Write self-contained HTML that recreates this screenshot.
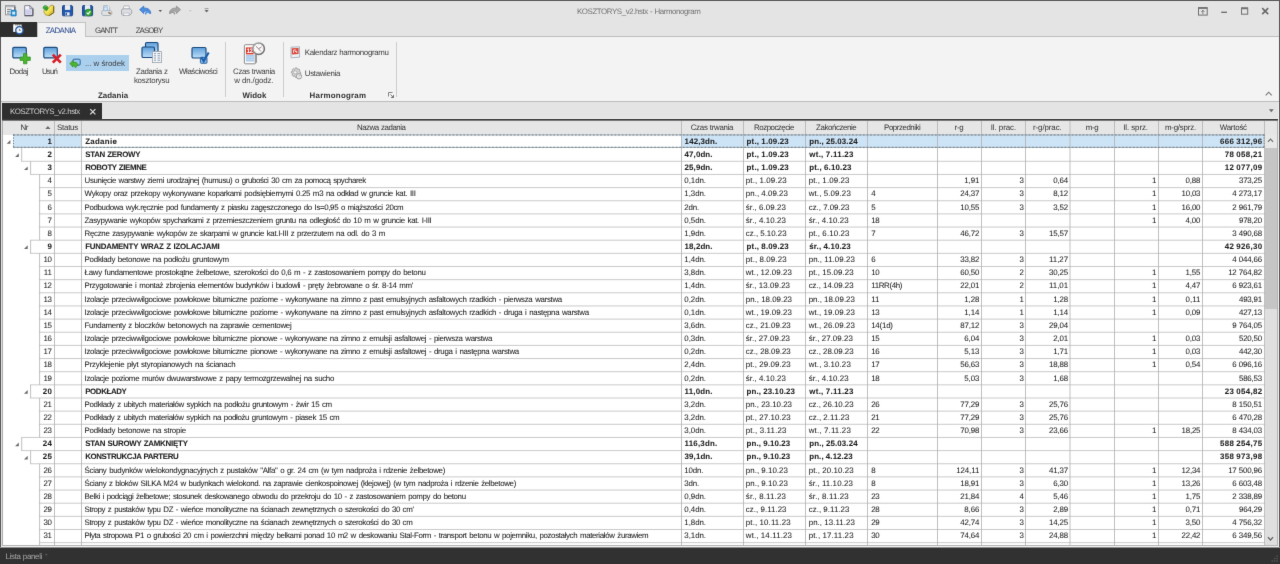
<!DOCTYPE html>
<html lang="pl">
<head>
<meta charset="utf-8">
<title>KOSZTORYS_v2.hstx - Harmonogram</title>
<style>
*{box-sizing:border-box;margin:0;padding:0}
html,body{width:1280px;height:564px;overflow:hidden;background:#e4e4e4}
body{position:relative;text-rendering:geometricPrecision;font-family:"Liberation Sans",sans-serif;font-size:7.9px;color:#444}
div,span,svg{position:absolute;white-space:pre}
span{height:12px;line-height:12px}
#win{left:0;top:0;width:1280px;height:564px;background:#e4e4e4;filter:url(#soft)}
#titlebar{left:0;top:0;width:1280px;height:37px;background:#e4e4e4}
#bt{left:0;top:0;width:1280px;height:1px;background:#585858}
#bl{left:0;top:0;width:1px;height:547px;background:#585858}
#br{left:1279px;top:0;width:1px;height:547px;background:#585858}
.ttl{color:#727272}
#appbtn{left:0;top:22px;width:37px;height:15px;background:#2e2e2e}
#tabline{left:86px;top:36px;width:1193px;height:1px;background:#c0c0c0}
#tab1{left:37px;top:22px;width:49px;height:15px;background:#f3f3f3;border:1px solid #c2c2c2;border-bottom:none}
.tb{color:#444}
.tba{color:#2c4a8e}
#ribbon{left:1px;top:37px;width:1278px;height:64px;background:#f3f3f3}
#ribline{left:1px;top:101px;width:1278px;height:1px;background:#bdbdbd}
.rt{color:#3c3c3c}
.rg{font-weight:bold;color:#303030}
.rsep{top:42px;width:1px;height:55px;background:#cdcdcd}
#hl1{left:66px;top:55px;width:63px;height:16px;background:#abd0ee}
#docbar{left:1px;top:102px;width:1278px;height:17px;background:#e4e4e4}
#doctab{left:2px;top:103px;width:100px;height:17px;background:#2e2e2e}
.dt{color:#cdcdcd}
#darkline{left:2px;top:119px;width:1276px;height:1px;background:#383838}
#preline{left:102px;top:118px;width:1176px;height:1px;background:#f0f0f0}
#darkline2{left:2px;top:120px;width:1276px;height:1px;background:#7a7a7a}
#gridbg{left:2px;top:121px;width:1276px;height:425px;background:#fff;border-left:1px solid #ababab}
#ghead{left:3px;top:121px;width:1275px;height:14px;background:#e6e6e6}
.h{color:#333}
#gbot{left:2px;top:545px;width:1276px;height:1px;background:#b4b4b4}
#gbot2{left:1px;top:546px;width:1278px;height:1px;background:#f0f0f0}
#status{left:0;top:547px;width:1280px;height:17px;background:#313131;border-top:1px solid #8e8e8e}
.sbt{color:#a6a6a6}
.c{color:#222;-webkit-text-stroke:0.05px #222}
.b{font-weight:bold;color:#202020}
#sb{left:1265px;top:135px;width:12px;height:410px;background:#dfdfdf}
#rfr{left:1277px;top:121px;width:1px;height:425px;background:#b2b2b2}
#rfr2{left:1278px;top:102px;width:1px;height:445px;background:#f2f2f2}
#sbth{left:1265px;top:148px;width:12px;height:161px;background:#c5c5c5}
#sbup{left:1265px;top:135px;width:12px;height:13px;background:#e8e8e8}
#hcorner{left:1265px;top:121px;width:12px;height:14px;background:#e6e6e6}
</style>
</head>
<body>
<svg width="0" height="0" style="left:0;top:0"><defs><filter id="soft" x="0" y="0" width="100%" height="100%" color-interpolation-filters="sRGB"><feConvolveMatrix order="3" kernelMatrix="0 1 0 1 10 1 0 1 0" divisor="14" edgeMode="duplicate" preserveAlpha="true"/></filter></defs></svg>
<div id="win">
<div id="titlebar"></div>
<div id="tabline"></div>
<div id="tab1"></div>
<div id="ribbon"></div>
<div id="ribline"></div>
<div id="hl1"></div>
<svg style="left:12px;top:46px" width="20" height="19" viewBox="0 0 20 19"><defs><linearGradient id="mg" x1="0" y1="0" x2="0" y2="1"><stop offset="0" stop-color="#5e9edb"/><stop offset="1" stop-color="#bfe0f8"/></linearGradient></defs><rect x="0.8" y="1.4" width="13.5" height="10.5" rx="1.3" fill="url(#mg)" stroke="#19497d" stroke-width="1.15"/><path d="M11.500 7.600h3.400v3.400h3.400v3.400h-3.400v3.400h-3.400v-3.400h-3.400v-3.400h3.400z" fill="#4bb52f" stroke="#2b8a1d" stroke-width="0.700"/></svg><svg style="left:43px;top:46px" width="20" height="19" viewBox="0 0 20 19"><rect x="0.8" y="1.4" width="13.5" height="10.5" rx="1.3" fill="url(#mg)" stroke="#19497d" stroke-width="1.15"/><path d="M9.800 8.600l8 8M17.800 8.600l-8 8" stroke="#d3202a" stroke-width="2.700"/></svg><svg style="left:69px;top:58px" width="12" height="11" viewBox="0 0 12 11"><rect x="4" y="1.200" width="7.200" height="6" rx="1" fill="#9cc8ee" stroke="#1f5b95" stroke-width="0.900"/><path d="M0.800 5.500l3.200-3v1.800h3.200l1.800 2.200-2.300 3.300-2-2.200h-.700v1.600z" fill="#4db330" stroke="#2b8a1d" stroke-width="0.600"/></svg><svg style="left:141px;top:41px" width="23" height="23" viewBox="0 0 23 23"><rect x="4.5" y="1.5" width="12.5" height="10" rx="1.3" fill="url(#mg)" stroke="#19497d" stroke-width="1.15"/><rect x="1.0" y="6.0" width="12.5" height="10.5" rx="1.3" fill="url(#mg)" stroke="#19497d" stroke-width="1.15"/><rect x="11.400" y="10.600" width="9" height="11" fill="#f3f5f8" stroke="#9aa0a8" stroke-width="0.800"/><path d="M13 12.600h2M16.500 12.600h2.600M13 14.800h2M16.500 14.800h2.600M13 17h2M16.500 17h2.600M13 19.200h2M16.500 19.200h2.600" stroke="#7f93ad" stroke-width="0.900"/></svg><svg style="left:191px;top:46px" width="21" height="19" viewBox="0 0 21 19"><rect x="1.0" y="1.5" width="14" height="10.5" rx="1.3" fill="url(#mg)" stroke="#19497d" stroke-width="1.15"/><rect x="9.400" y="11.300" width="6.600" height="6" rx="0.800" fill="#8db9e6" stroke="#1e5a9b" stroke-width="0.900"/><path d="M10.300 11.300l2.400 3.800 5-8.600" stroke="#1c5fae" stroke-width="2.100" fill="none"/></svg><svg style="left:243px;top:40px" width="24" height="25" viewBox="0 0 24 25"><defs><linearGradient id="cg" x1="0" y1="0" x2="1" y2="1"><stop offset="0" stop-color="#a9a9a9"/><stop offset="1" stop-color="#5f5f5f"/></linearGradient></defs><path d="M1.400 5.600q0-.9.900-.9h10.200q.9 0 .9.900v16.900l-1.700 1.300h-9.400q-.9 0-.9-.9z" fill="#fdfdfd" stroke="#808080" stroke-width="0.900"/><path d="M13.400 8v14.500l-1.700 1.300v-14z" fill="#9c9c9c"/><rect x="2.900" y="7.400" width="7.700" height="7" fill="#d9392e"/><rect x="2.900" y="14.900" width="8.300" height="6.600" fill="#a9c9ea"/><path d="M2.900 17.100h8.300M2.900 19.300h8.300" stroke="#dbe9f7" stroke-width="0.600"/><text x="3.400" y="13.300" font-family="Liberation Sans,sans-serif" font-size="6.400" font-weight="bold" fill="#fff" letter-spacing="-0.400">12</text><circle cx="15.600" cy="8.700" r="5.800" fill="#fbfbfb" stroke="url(#cg)" stroke-width="1.500"/><path d="M15.600 4.100v1M15.600 12.300v1M11 8.700h1M19.200 8.700h1M12.400 5.500l.7.700M18.100 11.200l.7.700M18.800 5.500l-.7.700M13.100 11.200l-.7.700" stroke="#bcbcbc" stroke-width="0.600"/><path d="M15.600 8.700l-2.600-2.300M15.600 8.700l2.900-1.700M15.600 8.700l2.100 2.600" stroke="#7c4a63" stroke-width="0.700"/></svg><svg style="left:290px;top:46px" width="11" height="13" viewBox="0 0 11 13"><path d="M1 1.200l8.500-.400v10.400l-8.500.600z" fill="#eef1f6" stroke="#9aa4b4" stroke-width="0.800"/><path d="M1.800 2.200l6.800-.300v6.200l-6.800.400z" fill="#d9483c"/><path d="M3.600 4h2.600M3.600 4v3M5 5.500h1.800v1.600" stroke="#fff" stroke-width="0.800" fill="none"/></svg><svg style="left:290px;top:67px" width="13" height="13" viewBox="0 0 13 13"><path d="M5.500 0.800l1.500.200.500 1.500 1.500-.600 1 1.100-.800 1.400 1.400.700v1.500l-1.500.500.600 1.500-1.100 1-1.400-.800-.700 1.400h-1.500l-.500-1.500-1.500.600-1-1.100.800-1.400-1.400-.700v-1.500l1.500-.500-.600-1.500 1.100-1 1.400.800z" fill="#d6d6d6" stroke="#8f8f8f" stroke-width="0.700"/><circle cx="5.300" cy="5.400" r="1.700" fill="#f3f3f3" stroke="#8f8f8f" stroke-width="0.600"/><circle cx="9" cy="9.300" r="2.700" fill="#e9e9e9" stroke="#8a8a8a" stroke-width="0.800"/><path d="M9 9.300l1.200-1.200" stroke="#777" stroke-width="0.600"/></svg><svg style="left:388px;top:92px" width="6" height="6" viewBox="0 0 6 6"><path d="M0.500 4.500V0.500h4" stroke="#777" stroke-width="0.900" fill="none"/><path d="M2.500 2.500l3 3M5.500 3v2.500h-2.500" stroke="#666" stroke-width="0.900" fill="none"/></svg>
<div class="rsep" style="left:225px"></div>
<div class="rsep" style="left:283px"></div>
<div class="rsep" style="left:396px"></div>
<div id="docbar"></div>
<div id="doctab"></div>
<svg style="left:5px;top:5px" width="12" height="12" viewBox="0 0 12 12"><rect x="0.500" y="0.500" width="9.400" height="9.300" fill="#fafafa" stroke="#8e9298" stroke-width="1"/><rect x="0.500" y="0.500" width="9.400" height="1.900" fill="#b0b4ba"/><path d="M9.900 1.500v3.700" stroke="#3c3c3c" stroke-width="0.900"/><path d="M2 4.300h4.600M2 6.300h3.200M2 8.100h2.700" stroke="#5f6870" stroke-width="0.900"/><rect x="5.900" y="5.100" width="5.400" height="6" rx="0.700" fill="#2490d4" stroke="#1a6fae" stroke-width="0.500"/><rect x="7.200" y="6.700" width="2.900" height="2.800" fill="#d4ebfa"/></svg><svg style="left:24px;top:5px" width="10" height="12" viewBox="0 0 10 12"><path d="M0.700 0.700h5.200l3 3v7h-8.200z" fill="#dcdcf3" stroke="#77778a" stroke-width="0.900"/><path d="M1.300 1.300h4l0 2.600h-4z" fill="#f4f4fc"/><path d="M8.900 3.700v7h-8.200" fill="none" stroke="#4d4d59" stroke-width="1"/><path d="M5.900 0.700v3h3z" fill="#ececf8" stroke="#6c6c7c" stroke-width="0.700"/><path d="M2.200 6.200h4.800M2.200 8.200h4.800" stroke="#bdbce0" stroke-width="0.900"/></svg><svg style="left:42px;top:4px" width="13" height="13" viewBox="0 0 13 13"><defs><linearGradient id="fg" x1="0" y1="0" x2="1" y2="1"><stop offset="0" stop-color="#f6f294"/><stop offset="0.550" stop-color="#f1e052"/><stop offset="1" stop-color="#c4a21c"/></linearGradient></defs><path d="M2.400 5.500l2.600-3 1.600 1.300 2.200-2.500h2.300l0.600 0.700v6.700l-4.600 2.900-3.400-0.600-1.900-3.300z" fill="url(#fg)" stroke="#9a8420" stroke-width="0.700"/><path d="M11.700 2.200v6.500l-4.600 2.900" fill="none" stroke="#6f5e12" stroke-width="1"/><path d="M1 4.300c0-2 1.600-3.100 3.100-2.600 1.100 0.400 1.600 1.400 1.400 2.600l0.800 0.100-2 2.500-2.300-2.400z" fill="#2f9e2c" stroke="#1b7a1d" stroke-width="0.500"/><path d="M2.300 3.400c0.500-.900 1.400-1.100 2.100-.600" stroke="#8be381" stroke-width="0.800" fill="none"/></svg><svg style="left:62px;top:5px" width="12" height="12" viewBox="0 0 12 12"><path d="M0.500 1.600a1.100 1.100 0 0 1 1.100-1.100h8.100l0.900 0.900v8.300a1.100 1.100 0 0 1-1.100 1.100h-8a1.100 1.100 0 0 1-1.100-1.100z" fill="#2159ae" stroke="#123a82" stroke-width="0.900"/><rect x="2.900" y="0.100" width="5.300" height="4.800" fill="#ededee"/><rect x="3" y="7.400" width="4.600" height="3.100" fill="#e7edf7"/><rect x="3.500" y="7.900" width="1.500" height="2.200" fill="#2c4f92"/></svg><svg style="left:82px;top:5px" width="12" height="12" viewBox="0 0 12 12"><path d="M0.500 1.600a1.100 1.100 0 0 1 1.100-1.100h8.100l0.900 0.900v8.300a1.100 1.100 0 0 1-1.100 1.100h-8a1.100 1.100 0 0 1-1.100-1.100z" fill="#2159ae" stroke="#123a82" stroke-width="0.900"/><rect x="2.900" y="0.100" width="5.300" height="4.800" fill="#ededee"/><rect x="3" y="7.400" width="4.600" height="3.100" fill="#e7edf7"/><rect x="3.500" y="7.900" width="1.500" height="2.200" fill="#2c4f92"/><circle cx="6.500" cy="7.600" r="3.500" fill="#37a637" stroke="#1d7a22" stroke-width="0.6"/><path d="M4.700 7.600l1.400 1.500 2.300-3" stroke="#fff" stroke-width="1.100" fill="none"/></svg><svg style="left:101px;top:5px" width="12" height="12" viewBox="0 0 12 12"><path d="M2.600 0.600h4.400l1.700 1.700v5.400h-6.100z" fill="#f4f8fd" stroke="#a5adba" stroke-width="0.8"/><path d="M0.800 6.200l1.400-.900h7.200l1.400 1.300v2.600l-1.800 1.300h-6.800l-1.400-1.100z" fill="#dfe2e7" stroke="#9da3ac" stroke-width="0.8"/><circle cx="4.700" cy="3.800" r="2.200" fill="#cfe5f9" stroke="#93acc8" stroke-width="0.8"/><path d="M7.400 7.200l2.400 1.700" stroke="#9b7a52" stroke-width="1.700"/></svg><svg style="left:121px;top:5px" width="12" height="12" viewBox="0 0 12 12"><path d="M3 0.900h4.800l1.100 3.500h-6.900z" fill="#fdfdfd" stroke="#a3a8b0" stroke-width="0.8"/><path d="M0.600 4.900l1.800-1.100h6.800l1.500 1.500v3.100l-2.300 2.100h-6.500l-1.300-1.400z" fill="#dcdee2" stroke="#90959d" stroke-width="0.8"/><path d="M2.300 8.100h6.200l-.9 2.400h-4.500z" fill="#fafafa" stroke="#a3a8b0" stroke-width="0.6"/></svg><svg style="left:139px;top:5px" width="13" height="12" viewBox="0 0 13 12"><path d="M0.600 4.600l4.200-3.500v2.100c4.200-.5 7 1.600 6.900 5.400-1.100-1.900-3-2.700-4.900-2.500l-2 0.500v2z" fill="#4a8fe2" stroke="#2c69bd" stroke-width="0.7"/><path d="M6.600 9.600c0-1.500 0.900-2.600 2.200-2.600 1.100 0 1.900 0.700 2.100 1.800" fill="none" stroke="#4a8fe2" stroke-width="1.300"/></svg><svg style="left:158px;top:9px" width="5" height="4" viewBox="0 0 5 4"><path d="M0.500 0.900h3.600l-1.800 2.200z" fill="#5a5a5a"/></svg><svg style="left:169px;top:5px" width="13" height="12" viewBox="0 0 13 12"><path d="M11.600 4.600l-4.200-3.500v2.100c-4.200-.5-7 1.600-6.900 5.400 1.100-1.900 3-2.700 4.900-2.500l2 0.500v2z" fill="#a6a6a6" stroke="#8a8a8a" stroke-width="0.7"/><path d="M5.600 9.600c0-1.500-0.900-2.600-2.200-2.600-1.100 0-1.900 0.700-2.100 1.800" fill="none" stroke="#9a9a9a" stroke-width="1.300"/></svg><svg style="left:188px;top:9px" width="5" height="4" viewBox="0 0 5 4"><path d="M0.500 0.900h3.600l-1.800 2.200z" fill="#cdcdcd"/></svg><svg style="left:204px;top:8px" width="6" height="6" viewBox="0 0 6 6"><path d="M0.700 0.600h3.800" stroke="#7a7a7a" stroke-width="0.7"/><path d="M0.500 1.900h4.200l-2.100 2.700z" fill="#666"/></svg>
<svg style="left:1198px;top:7px" width="10" height="9" viewBox="0 0 10 9"><rect x="0.500" y="0.600" width="8.700" height="7.500" fill="none" stroke="#707070" stroke-width="1"/><path d="M0.500 1.200h8.700" stroke="#707070" stroke-width="1.400"/><path d="M4.850 7.200V3.300M3.300 4.900l1.550-1.700 1.550 1.700" stroke="#707070" stroke-width="0.9" fill="none"/></svg><svg style="left:1221px;top:11px" width="7" height="3" viewBox="0 0 7 3"><path d="M0.200 1.300h5.800" stroke="#686868" stroke-width="1.300"/></svg><svg style="left:1241px;top:7px" width="8" height="8" viewBox="0 0 8 8"><rect x="0.500" y="0.900" width="6.200" height="6.300" fill="none" stroke="#707070" stroke-width="1"/><path d="M0.500 1.400h6.200" stroke="#707070" stroke-width="1.700"/></svg><svg style="left:1261px;top:7px" width="9" height="8" viewBox="0 0 9 8"><path d="M1.200 1.100l6 6M7.200 1.100l-6 6" stroke="#666" stroke-width="1.500"/></svg><svg style="left:1265px;top:91px" width="8" height="5" viewBox="0 0 8 5"><path d="M0.700 4.300l3-3.100 3 3.100" stroke="#737373" stroke-width="1.100" fill="none"/></svg><svg style="left:1268px;top:108px" width="7" height="5" viewBox="0 0 7 5"><path d="M0.900 1.300h4.800l-2.400 3z" fill="#666"/></svg>
<svg style="left:89px;top:108px" width="8" height="8" viewBox="0 0 8 8"><path d="M1.200 1.100l5.200 5.200M6.400 1.100l-5.200 5.200" stroke="#e6e6e6" stroke-width="1.150"/></svg>
<div id="preline"></div><div id="darkline"></div><div id="darkline2"></div>
<div id="gridbg"></div>
<div id="ghead"></div>
<div id="hcorner"></div>
<svg style="left:45px;top:125px" width="6" height="5" viewBox="0 0 6 5"><path d="M0.300 4l2.600-3 2.600 3z" fill="#6c6c6c"/></svg>
<svg id="gsvg" width="1280" height="564" viewBox="0 0 1280 564" style="left:0;top:0"><rect x="13.3" y="134.7" width="1251.2" height="12.65" fill="#cde4f7"/><rect x="82" y="134.7" width="599" height="12.65" fill="#fff"/><path d="M21.2 161.3H1265M30.1 174.45H1265M39.1 187.6H1265M39.1 200.75H1265M39.1 213.9H1265M39.1 227.05H1265M30.1 240.2H1265M30.1 253.35H1265M39.1 266.5H1265M39.1 279.65H1265M39.1 292.8H1265M39.1 305.95H1265M39.1 319.1H1265M39.1 332.25H1265M39.1 345.4H1265M39.1 358.55H1265M39.1 371.7H1265M30.1 384.85H1265M30.1 398H1265M39.1 411.15H1265M39.1 424.3H1265M21.2 437.45H1265M21.2 450.6H1265M30.1 463.75H1265M39.1 476.9H1265M39.1 490.05H1265M39.1 503.2H1265M39.1 516.35H1265M39.1 529.5H1265M39.1 542.65H1265" stroke="#bcbcbc" stroke-width="0.8" fill="none"/><path d="M21.7 148.15V161.3M30.6 161.3V174.45M39.6 174.45V240.2M30.6 240.2V253.35M39.6 253.35V384.85M30.6 384.85V398M39.6 398V437.45M21.7 437.45V450.6M30.6 450.6V463.75M39.6 463.75V545.5M54.5 121V545.5M81.5 121V545.5M681.5 121V545.5M743.5 121V545.5M805.5 121V545.5M867.5 121V545.5M937.5 121V545.5M981.5 121V545.5M1025.5 121V545.5M1070 121V545.5M1114.5 121V545.5M1158.5 121V545.5M1202.5 121V545.5M1264.5 121V545.5" stroke="#b0b0b0" stroke-width="0.8" fill="none"/><path d="M13.3 134.95H1264.5" stroke="#9ea9b2" stroke-width="1" fill="none"/><path d="M13.3 134.95H1264.5" stroke="#77828b" stroke-width="1" stroke-dasharray="1.8 1.8" fill="none"/><path d="M13.3 147.35H1264.5" stroke="#9ea9b2" stroke-width="1" fill="none"/><path d="M13.3 147.35H1264.5" stroke="#77828b" stroke-width="1" stroke-dasharray="1.8 1.8" fill="none"/><path d="M13.5 134.65V147.35M1264 134.65V147.35" stroke="#68727b" stroke-width="0.9" stroke-dasharray="1.36 1.36" fill="none"/><path d="M10.4 143.8v-3.7l-3.7 3.7zM18.8 156.95v-3.7l-3.7 3.7zM27.7 170.1v-3.7l-3.7 3.7zM27.7 249v-3.7l-3.7 3.7zM27.7 393.65v-3.7l-3.7 3.7zM18.8 446.25v-3.7l-3.7 3.7zM27.7 459.4v-3.7l-3.7 3.7z" fill="#6a6a6a"/></svg>
<span class="ttl" style="left:577px;top:6px;letter-spacing:-0.41px;word-spacing:0.41px">KOSZTORYS_v2.hstx - Harmonogram</span>
<span class="tb tba" style="left:45.7px;top:25px;letter-spacing:-0.64px;word-spacing:0.64px">ZADANIA</span>
<span class="tb" style="left:94.9px;top:25px;letter-spacing:-0.9px;word-spacing:0.9px">GANTT</span>
<span class="tb" style="left:135.7px;top:25px;letter-spacing:-0.9px;word-spacing:0.9px">ZASOBY</span>
<span class="rt" style="left:9.4px;top:66px;letter-spacing:-0.41px;word-spacing:0.41px">Dodaj</span>
<span class="rt" style="left:41.9px;top:66px;letter-spacing:-0.81px;word-spacing:0.81px">Usuń</span>
<span class="rt" style="left:84.9px;top:58px;letter-spacing:-0.03px;word-spacing:0.03px">... w środek</span>
<span class="rt" style="left:136px;top:66px;letter-spacing:-0.4px;word-spacing:0.4px">Zadania z</span>
<span class="rt" style="left:133.9px;top:75px;letter-spacing:-0.22px;word-spacing:0.22px">kosztorysu</span>
<span class="rt" style="left:179px;top:66px;letter-spacing:-0.41px;word-spacing:0.41px">Właściwości</span>
<span class="rt" style="left:233.1px;top:66px;letter-spacing:-0.35px;word-spacing:0.35px">Czas trwania</span>
<span class="rt" style="left:234.3px;top:75px;letter-spacing:-0.14px;word-spacing:0.14px">w dn./godz.</span>
<span class="rt" style="left:304.8px;top:47px;letter-spacing:-0.36px;word-spacing:0.36px">Kalendarz harmonogramu</span>
<span class="rt" style="left:304.8px;top:68px;letter-spacing:-0.32px;word-spacing:0.32px">Ustawienia</span>
<span class="rg" style="left:97.9px;top:90px;letter-spacing:0.06px;word-spacing:-0.06px">Zadania</span>
<span class="rg" style="left:242.6px;top:90px;letter-spacing:0.04px;word-spacing:-0.04px">Widok</span>
<span class="rg" style="left:309.6px;top:90px;letter-spacing:0.25px;word-spacing:-0.25px">Harmonogram</span>
<span class="dt" style="left:9.9px;top:106px;letter-spacing:-0.46px;word-spacing:0.46px">KOSZTORYS_v2.hstx</span>
<span class="h" style="left:20.4px;top:122px;letter-spacing:-0.3px;word-spacing:0.3px">Nr</span>
<span class="h" style="left:57.1px;top:122px;letter-spacing:-0.26px;word-spacing:0.26px">Status</span>
<span class="h" style="left:356.9px;top:122px;letter-spacing:-0.44px;word-spacing:0.44px">Nazwa zadania</span>
<span class="h" style="left:690.7px;top:122px;letter-spacing:-0.28px;word-spacing:0.28px">Czas trwania</span>
<span class="h" style="left:754.1px;top:122px;letter-spacing:-0.5px;word-spacing:0.5px">Rozpoczęcie</span>
<span class="h" style="left:816.1px;top:122px;letter-spacing:-0.41px;word-spacing:0.41px">Zakończenie</span>
<span class="h" style="left:884.1px;top:122px;letter-spacing:-0.45px;word-spacing:0.45px">Poprzedniki</span>
<span class="h" style="left:954.5px;top:122px;letter-spacing:-0.23px;word-spacing:0.23px">r-g</span>
<span class="h" style="left:990.7px;top:122px;letter-spacing:-0.07px;word-spacing:0.07px">Il. prac.</span>
<span class="h" style="left:1033px;top:122px;letter-spacing:-0.08px;word-spacing:0.08px">r-g/prac.</span>
<span class="h" style="left:1085.7px;top:122px;letter-spacing:-0.3px;word-spacing:0.3px">m-g</span>
<span class="h" style="left:1123.2px;top:122px;letter-spacing:-0.09px;word-spacing:0.09px">Il. sprz.</span>
<span class="h" style="left:1164.9px;top:122px;letter-spacing:-0.21px;word-spacing:0.21px">m-g/sprz.</span>
<span class="h" style="left:1219.7px;top:122px;letter-spacing:-0.21px;word-spacing:0.21px">Wartość</span>
<span class="c b" style="right:1228.1px;top:136px">1</span><span class="c b" style="left:85.2px;top:136px;letter-spacing:0.3px;word-spacing:-0.3px">Zadanie</span><span class="c b" style="left:684.6px;top:136px;letter-spacing:0.15px;word-spacing:-0.15px">142,3dn.</span><span class="c b" style="left:746.6px;top:136px;letter-spacing:0.18px;word-spacing:-0.18px">pt., 1.09.23</span><span class="c b" style="left:809.3px;top:136px;letter-spacing:0.12px;word-spacing:-0.12px">pn., 25.03.24</span><span class="c b" style="right:17.57px;top:136px;letter-spacing:0.33px;word-spacing:-0.33px">666 312,96</span>
<span class="c b" style="right:1228.1px;top:149px">2</span><span class="c b" style="left:85.2px;top:149px;letter-spacing:-0.27px;word-spacing:0.27px">STAN ZEROWY</span><span class="c b" style="left:684.6px;top:149px;letter-spacing:0.11px;word-spacing:-0.11px">47,0dn.</span><span class="c b" style="left:746.6px;top:149px;letter-spacing:0.18px;word-spacing:-0.18px">pt., 1.09.23</span><span class="c b" style="left:809.3px;top:149px;letter-spacing:0.29px;word-spacing:-0.29px">wt., 7.11.23</span><span class="c b" style="right:17.58px;top:149px;letter-spacing:0.32px;word-spacing:-0.32px">78 058,21</span>
<span class="c b" style="right:1228.1px;top:162px">3</span><span class="c b" style="left:85.2px;top:162px;letter-spacing:-0.37px;word-spacing:0.37px">ROBOTY ZIEMNE</span><span class="c b" style="left:684.6px;top:162px;letter-spacing:0.11px;word-spacing:-0.11px">25,9dn.</span><span class="c b" style="left:746.6px;top:162px;letter-spacing:0.18px;word-spacing:-0.18px">pt., 1.09.23</span><span class="c b" style="left:809.3px;top:162px;letter-spacing:0.18px;word-spacing:-0.18px">pt., 6.10.23</span><span class="c b" style="right:17.58px;top:162px;letter-spacing:0.32px;word-spacing:-0.32px">12 077,09</span>
<span class="c" style="right:1228.1px;top:175px">4</span><span class="c" style="left:84.6px;top:175px;letter-spacing:-0.37px;word-spacing:0.87px">Usunięcie warstwy ziemi urodzajnej (humusu) o grubości 30 cm za pomocą spycharek</span><span class="c" style="left:684.3px;top:175px;letter-spacing:-0.04px;word-spacing:0.04px">0,1dn.</span><span class="c" style="left:745.8px;top:175px;letter-spacing:0.13px;word-spacing:-0.13px">pt., 1.09.23</span><span class="c" style="left:808.7px;top:175px;letter-spacing:0.13px;word-spacing:-0.13px">pt., 1.09.23</span><span class="c" style="right:300.84px;top:175px;letter-spacing:-0.14px;word-spacing:0.14px">1,91</span><span class="c" style="right:256.2px;top:175px">3</span><span class="c" style="right:212.04px;top:175px;letter-spacing:-0.14px;word-spacing:0.14px">0,64</span><span class="c" style="right:123.6px;top:175px">1</span><span class="c" style="right:79.64px;top:175px;letter-spacing:-0.14px;word-spacing:0.14px">0,88</span><span class="c" style="right:18.11px;top:175px;letter-spacing:-0.21px;word-spacing:0.21px">373,25</span>
<span class="c" style="right:1228.1px;top:188px">5</span><span class="c" style="left:84.6px;top:188px;letter-spacing:-0.29px;word-spacing:0.79px">Wykopy oraz przekopy wykonywane koparkami podsiębiernymi 0.25 m3 na odkład w gruncie kat. III</span><span class="c" style="left:684.3px;top:188px;letter-spacing:-0.04px;word-spacing:0.04px">1,3dn.</span><span class="c" style="left:745.8px;top:188px;letter-spacing:0.04px;word-spacing:-0.04px">pn., 4.09.23</span><span class="c" style="left:808.7px;top:188px;letter-spacing:0.13px;word-spacing:-0.13px">wt., 5.09.23</span><span class="c" style="left:871.2px;top:188px">4</span><span class="c" style="right:300.88px;top:188px;letter-spacing:-0.18px;word-spacing:0.18px">24,37</span><span class="c" style="right:256.2px;top:188px">3</span><span class="c" style="right:212.04px;top:188px;letter-spacing:-0.14px;word-spacing:0.14px">8,12</span><span class="c" style="right:123.6px;top:188px">1</span><span class="c" style="right:79.68px;top:188px;letter-spacing:-0.18px;word-spacing:0.18px">10,03</span><span class="c" style="right:18.04px;top:188px;letter-spacing:-0.14px;word-spacing:0.14px">4 273,17</span>
<span class="c" style="right:1228.1px;top:202px">6</span><span class="c" style="left:84.6px;top:202px;letter-spacing:-0.35px;word-spacing:0.85px">Podbudowa wyk.ręcznie pod fundamenty z piasku zagęszczonego do Is=0,95 o miąższości 20cm</span><span class="c" style="left:684.3px;top:202px;letter-spacing:-0.14px;word-spacing:0.14px">2dn.</span><span class="c" style="left:745.8px;top:202px;letter-spacing:0.1px;word-spacing:-0.1px">śr., 6.09.23</span><span class="c" style="left:808.7px;top:202px">cz., 7.09.23</span><span class="c" style="left:871.2px;top:202px">5</span><span class="c" style="right:300.88px;top:202px;letter-spacing:-0.18px;word-spacing:0.18px">10,55</span><span class="c" style="right:256.2px;top:202px">3</span><span class="c" style="right:212.04px;top:202px;letter-spacing:-0.14px;word-spacing:0.14px">3,52</span><span class="c" style="right:123.6px;top:202px">1</span><span class="c" style="right:79.68px;top:202px;letter-spacing:-0.18px;word-spacing:0.18px">16,00</span><span class="c" style="right:18.04px;top:202px;letter-spacing:-0.14px;word-spacing:0.14px">2 961,79</span>
<span class="c" style="right:1228.1px;top:215px">7</span><span class="c" style="left:84.6px;top:215px;letter-spacing:-0.32px;word-spacing:0.82px">Zasypywanie wykopów spycharkami z przemieszczeniem gruntu na odległość do 10 m w gruncie kat. I-III</span><span class="c" style="left:684.3px;top:215px;letter-spacing:-0.04px;word-spacing:0.04px">0,5dn.</span><span class="c" style="left:745.8px;top:215px;letter-spacing:0.1px;word-spacing:-0.1px">śr., 4.10.23</span><span class="c" style="left:808.7px;top:215px;letter-spacing:0.1px;word-spacing:-0.1px">śr., 4.10.23</span><span class="c" style="left:871.2px;top:215px;letter-spacing:-0.3px;word-spacing:0.3px">18</span><span class="c" style="right:123.6px;top:215px">1</span><span class="c" style="right:79.64px;top:215px;letter-spacing:-0.14px;word-spacing:0.14px">4,00</span><span class="c" style="right:18.11px;top:215px;letter-spacing:-0.21px;word-spacing:0.21px">978,20</span>
<span class="c" style="right:1228.1px;top:228px">8</span><span class="c" style="left:84.6px;top:228px;letter-spacing:-0.31px;word-spacing:0.81px">Ręczne zasypywanie wykopów ze skarpami w gruncie kat.I-III z przerzutem na odl. do 3 m</span><span class="c" style="left:684.3px;top:228px;letter-spacing:-0.04px;word-spacing:0.04px">1,9dn.</span><span class="c" style="left:745.8px;top:228px">cz., 5.10.23</span><span class="c" style="left:808.7px;top:228px;letter-spacing:0.13px;word-spacing:-0.13px">pt., 6.10.23</span><span class="c" style="left:871.2px;top:228px">7</span><span class="c" style="right:300.88px;top:228px;letter-spacing:-0.18px;word-spacing:0.18px">46,72</span><span class="c" style="right:256.2px;top:228px">3</span><span class="c" style="right:212.08px;top:228px;letter-spacing:-0.18px;word-spacing:0.18px">15,57</span><span class="c" style="right:18.04px;top:228px;letter-spacing:-0.14px;word-spacing:0.14px">3 490,68</span>
<span class="c b" style="right:1228.1px;top:241px">9</span><span class="c b" style="left:85.2px;top:241px;letter-spacing:-0.22px;word-spacing:0.72px">FUNDAMENTY WRAZ Z IZOLACJAMI</span><span class="c b" style="left:684.6px;top:241px;letter-spacing:0.11px;word-spacing:-0.11px">18,2dn.</span><span class="c b" style="left:746.6px;top:241px;letter-spacing:0.18px;word-spacing:-0.18px">pt., 8.09.23</span><span class="c b" style="left:809.3px;top:241px;letter-spacing:0.15px;word-spacing:-0.15px">śr., 4.10.23</span><span class="c b" style="right:17.58px;top:241px;letter-spacing:0.32px;word-spacing:-0.32px">42 926,30</span>
<span class="c" style="right:1228.4px;top:254px;letter-spacing:-0.3px;word-spacing:0.3px">10</span><span class="c" style="left:84.6px;top:254px;letter-spacing:-0.24px;word-spacing:0.74px">Podkłady betonowe na podłożu gruntowym</span><span class="c" style="left:684.3px;top:254px;letter-spacing:-0.04px;word-spacing:0.04px">1,4dn.</span><span class="c" style="left:745.8px;top:254px;letter-spacing:0.13px;word-spacing:-0.13px">pt., 8.09.23</span><span class="c" style="left:808.7px;top:254px;letter-spacing:0.06px;word-spacing:-0.06px">pn., 11.09.23</span><span class="c" style="left:871.2px;top:254px">6</span><span class="c" style="right:300.88px;top:254px;letter-spacing:-0.18px;word-spacing:0.18px">33,82</span><span class="c" style="right:256.2px;top:254px">3</span><span class="c" style="right:211.94px;top:254px;letter-spacing:-0.04px;word-spacing:0.04px">11,27</span><span class="c" style="right:18.04px;top:254px;letter-spacing:-0.14px;word-spacing:0.14px">4 044,66</span>
<span class="c" style="right:1228.14px;top:267px;letter-spacing:-0.04px;word-spacing:0.04px">11</span><span class="c" style="left:84.6px;top:267px;letter-spacing:-0.3px;word-spacing:0.8px">Ławy fundamentowe prostokątne żelbetowe, szerokości do 0,6 m - z zastosowaniem pompy do betonu</span><span class="c" style="left:684.3px;top:267px;letter-spacing:-0.04px;word-spacing:0.04px">3,8dn.</span><span class="c" style="left:745.8px;top:267px;letter-spacing:0.09px;word-spacing:-0.09px">wt., 12.09.23</span><span class="c" style="left:808.7px;top:267px;letter-spacing:0.09px;word-spacing:-0.09px">pt., 15.09.23</span><span class="c" style="left:871.2px;top:267px;letter-spacing:-0.3px;word-spacing:0.3px">10</span><span class="c" style="right:300.88px;top:267px;letter-spacing:-0.18px;word-spacing:0.18px">60,50</span><span class="c" style="right:256.2px;top:267px">2</span><span class="c" style="right:212.08px;top:267px;letter-spacing:-0.18px;word-spacing:0.18px">30,25</span><span class="c" style="right:123.6px;top:267px">1</span><span class="c" style="right:79.64px;top:267px;letter-spacing:-0.14px;word-spacing:0.14px">1,55</span><span class="c" style="right:18.06px;top:267px;letter-spacing:-0.16px;word-spacing:0.16px">12 764,82</span>
<span class="c" style="right:1228.4px;top:280px;letter-spacing:-0.3px;word-spacing:0.3px">12</span><span class="c" style="left:84.6px;top:280px;letter-spacing:-0.31px;word-spacing:0.81px">Przygotowanie i montaż zbrojenia elementów budynków i budowli - pręty żebrowane o śr. 8-14 mm&#x27;</span><span class="c" style="left:684.3px;top:280px;letter-spacing:-0.04px;word-spacing:0.04px">1,4dn.</span><span class="c" style="left:745.8px;top:280px;letter-spacing:0.07px;word-spacing:-0.07px">śr., 13.09.23</span><span class="c" style="left:808.7px;top:280px;letter-spacing:-0.03px;word-spacing:0.03px">cz., 14.09.23</span><span class="c" style="left:871.2px;top:280px;letter-spacing:-0.34px;word-spacing:0.34px">11RR(4h)</span><span class="c" style="right:300.88px;top:280px;letter-spacing:-0.18px;word-spacing:0.18px">22,01</span><span class="c" style="right:256.2px;top:280px">2</span><span class="c" style="right:211.94px;top:280px;letter-spacing:-0.04px;word-spacing:0.04px">11,01</span><span class="c" style="right:123.6px;top:280px">1</span><span class="c" style="right:79.64px;top:280px;letter-spacing:-0.14px;word-spacing:0.14px">4,47</span><span class="c" style="right:18.04px;top:280px;letter-spacing:-0.14px;word-spacing:0.14px">6 923,61</span>
<span class="c" style="right:1228.4px;top:294px;letter-spacing:-0.3px;word-spacing:0.3px">13</span><span class="c" style="left:84.6px;top:294px;letter-spacing:-0.31px;word-spacing:0.81px">Izolacje przeciwwilgociowe powłokowe bitumiczne poziome - wykonywane na zimno z past emulsyjnych asfaltowych rzadkich - pierwsza warstwa</span><span class="c" style="left:684.3px;top:294px;letter-spacing:-0.04px;word-spacing:0.04px">0,2dn.</span><span class="c" style="left:745.8px;top:294px;letter-spacing:0.01px;word-spacing:-0.01px">pn., 18.09.23</span><span class="c" style="left:808.7px;top:294px;letter-spacing:0.01px;word-spacing:-0.01px">pn., 18.09.23</span><span class="c" style="left:871.2px;top:294px;letter-spacing:-0.04px;word-spacing:0.04px">11</span><span class="c" style="right:300.84px;top:294px;letter-spacing:-0.14px;word-spacing:0.14px">1,28</span><span class="c" style="right:256.2px;top:294px">1</span><span class="c" style="right:212.04px;top:294px;letter-spacing:-0.14px;word-spacing:0.14px">1,28</span><span class="c" style="right:123.6px;top:294px">1</span><span class="c" style="right:79.44px;top:294px;letter-spacing:0.06px;word-spacing:-0.06px">0,11</span><span class="c" style="right:18.11px;top:294px;letter-spacing:-0.21px;word-spacing:0.21px">493,91</span>
<span class="c" style="right:1228.4px;top:307px;letter-spacing:-0.3px;word-spacing:0.3px">14</span><span class="c" style="left:84.6px;top:307px;letter-spacing:-0.31px;word-spacing:0.81px">Izolacje przeciwwilgociowe powłokowe bitumiczne poziome - wykonywane na zimno z past emulsyjnych asfaltowych rzadkich - druga i następna warstwa</span><span class="c" style="left:684.3px;top:307px;letter-spacing:-0.04px;word-spacing:0.04px">0,1dn.</span><span class="c" style="left:745.8px;top:307px;letter-spacing:0.09px;word-spacing:-0.09px">wt., 19.09.23</span><span class="c" style="left:808.7px;top:307px;letter-spacing:0.09px;word-spacing:-0.09px">wt., 19.09.23</span><span class="c" style="left:871.2px;top:307px;letter-spacing:-0.3px;word-spacing:0.3px">13</span><span class="c" style="right:300.84px;top:307px;letter-spacing:-0.14px;word-spacing:0.14px">1,14</span><span class="c" style="right:256.2px;top:307px">1</span><span class="c" style="right:212.04px;top:307px;letter-spacing:-0.14px;word-spacing:0.14px">1,14</span><span class="c" style="right:123.6px;top:307px">1</span><span class="c" style="right:79.64px;top:307px;letter-spacing:-0.14px;word-spacing:0.14px">0,09</span><span class="c" style="right:18.11px;top:307px;letter-spacing:-0.21px;word-spacing:0.21px">427,13</span>
<span class="c" style="right:1228.4px;top:320px;letter-spacing:-0.3px;word-spacing:0.3px">15</span><span class="c" style="left:84.6px;top:320px;letter-spacing:-0.29px;word-spacing:0.79px">Fundamenty z bloczków betonowych na zaprawie cementowej</span><span class="c" style="left:684.3px;top:320px;letter-spacing:-0.04px;word-spacing:0.04px">3,6dn.</span><span class="c" style="left:745.8px;top:320px;letter-spacing:-0.03px;word-spacing:0.03px">cz., 21.09.23</span><span class="c" style="left:808.7px;top:320px;letter-spacing:0.09px;word-spacing:-0.09px">wt., 26.09.23</span><span class="c" style="left:871.2px;top:320px;letter-spacing:-0.21px;word-spacing:0.21px">14(1d)</span><span class="c" style="right:300.88px;top:320px;letter-spacing:-0.18px;word-spacing:0.18px">87,12</span><span class="c" style="right:256.2px;top:320px">3</span><span class="c" style="right:212.08px;top:320px;letter-spacing:-0.18px;word-spacing:0.18px">29,04</span><span class="c" style="right:18.04px;top:320px;letter-spacing:-0.14px;word-spacing:0.14px">9 764,05</span>
<span class="c" style="right:1228.4px;top:333px;letter-spacing:-0.3px;word-spacing:0.3px">16</span><span class="c" style="left:84.6px;top:333px;letter-spacing:-0.31px;word-spacing:0.81px">Izolacje przeciwwilgociowe powłokowe bitumiczne pionowe - wykonywane na zimno z emulsji asfaltowej - pierwsza warstwa</span><span class="c" style="left:684.3px;top:333px;letter-spacing:-0.04px;word-spacing:0.04px">0,3dn.</span><span class="c" style="left:745.8px;top:333px;letter-spacing:0.07px;word-spacing:-0.07px">śr., 27.09.23</span><span class="c" style="left:808.7px;top:333px;letter-spacing:0.07px;word-spacing:-0.07px">śr., 27.09.23</span><span class="c" style="left:871.2px;top:333px;letter-spacing:-0.3px;word-spacing:0.3px">15</span><span class="c" style="right:300.84px;top:333px;letter-spacing:-0.14px;word-spacing:0.14px">6,04</span><span class="c" style="right:256.2px;top:333px">3</span><span class="c" style="right:212.04px;top:333px;letter-spacing:-0.14px;word-spacing:0.14px">2,01</span><span class="c" style="right:123.6px;top:333px">1</span><span class="c" style="right:79.64px;top:333px;letter-spacing:-0.14px;word-spacing:0.14px">0,03</span><span class="c" style="right:18.11px;top:333px;letter-spacing:-0.21px;word-spacing:0.21px">520,50</span>
<span class="c" style="right:1228.4px;top:346px;letter-spacing:-0.3px;word-spacing:0.3px">17</span><span class="c" style="left:84.6px;top:346px;letter-spacing:-0.31px;word-spacing:0.81px">Izolacje przeciwwilgociowe powłokowe bitumiczne pionowe - wykonywane na zimno z emulsji asfaltowej - druga i następna warstwa</span><span class="c" style="left:684.3px;top:346px;letter-spacing:-0.04px;word-spacing:0.04px">0,2dn.</span><span class="c" style="left:745.8px;top:346px;letter-spacing:-0.03px;word-spacing:0.03px">cz., 28.09.23</span><span class="c" style="left:808.7px;top:346px;letter-spacing:-0.03px;word-spacing:0.03px">cz., 28.09.23</span><span class="c" style="left:871.2px;top:346px;letter-spacing:-0.3px;word-spacing:0.3px">16</span><span class="c" style="right:300.84px;top:346px;letter-spacing:-0.14px;word-spacing:0.14px">5,13</span><span class="c" style="right:256.2px;top:346px">3</span><span class="c" style="right:212.04px;top:346px;letter-spacing:-0.14px;word-spacing:0.14px">1,71</span><span class="c" style="right:123.6px;top:346px">1</span><span class="c" style="right:79.64px;top:346px;letter-spacing:-0.14px;word-spacing:0.14px">0,03</span><span class="c" style="right:18.11px;top:346px;letter-spacing:-0.21px;word-spacing:0.21px">442,30</span>
<span class="c" style="right:1228.4px;top:359px;letter-spacing:-0.3px;word-spacing:0.3px">18</span><span class="c" style="left:84.6px;top:359px;letter-spacing:-0.23px;word-spacing:0.73px">Przyklejenie płyt styropianowych na ścianach</span><span class="c" style="left:684.3px;top:359px;letter-spacing:-0.04px;word-spacing:0.04px">2,4dn.</span><span class="c" style="left:745.8px;top:359px;letter-spacing:0.09px;word-spacing:-0.09px">pt., 29.09.23</span><span class="c" style="left:808.7px;top:359px;letter-spacing:0.13px;word-spacing:-0.13px">wt., 3.10.23</span><span class="c" style="left:871.2px;top:359px;letter-spacing:-0.3px;word-spacing:0.3px">17</span><span class="c" style="right:300.88px;top:359px;letter-spacing:-0.18px;word-spacing:0.18px">56,63</span><span class="c" style="right:256.2px;top:359px">3</span><span class="c" style="right:212.08px;top:359px;letter-spacing:-0.18px;word-spacing:0.18px">18,88</span><span class="c" style="right:123.6px;top:359px">1</span><span class="c" style="right:79.64px;top:359px;letter-spacing:-0.14px;word-spacing:0.14px">0,54</span><span class="c" style="right:18.04px;top:359px;letter-spacing:-0.14px;word-spacing:0.14px">6 096,16</span>
<span class="c" style="right:1228.4px;top:373px;letter-spacing:-0.3px;word-spacing:0.3px">19</span><span class="c" style="left:84.6px;top:373px;letter-spacing:-0.31px;word-spacing:0.81px">Izolacje poziome murów dwuwarstwowe z papy termozgrzewalnej na sucho</span><span class="c" style="left:684.3px;top:373px;letter-spacing:-0.04px;word-spacing:0.04px">0,2dn.</span><span class="c" style="left:745.8px;top:373px;letter-spacing:0.1px;word-spacing:-0.1px">śr., 4.10.23</span><span class="c" style="left:808.7px;top:373px;letter-spacing:0.1px;word-spacing:-0.1px">śr., 4.10.23</span><span class="c" style="left:871.2px;top:373px;letter-spacing:-0.3px;word-spacing:0.3px">18</span><span class="c" style="right:300.84px;top:373px;letter-spacing:-0.14px;word-spacing:0.14px">5,03</span><span class="c" style="right:256.2px;top:373px">3</span><span class="c" style="right:212.04px;top:373px;letter-spacing:-0.14px;word-spacing:0.14px">1,68</span><span class="c" style="right:18.11px;top:373px;letter-spacing:-0.21px;word-spacing:0.21px">586,53</span>
<span class="c b" style="right:1227.8px;top:386px;letter-spacing:0.3px;word-spacing:-0.3px">20</span><span class="c b" style="left:85.2px;top:386px;letter-spacing:-0.38px;word-spacing:0.38px">PODKŁADY</span><span class="c b" style="left:684.6px;top:386px;letter-spacing:0.18px;word-spacing:-0.18px">11,0dn.</span><span class="c b" style="left:746.6px;top:386px;letter-spacing:0.12px;word-spacing:-0.12px">pn., 23.10.23</span><span class="c b" style="left:809.3px;top:386px;letter-spacing:0.29px;word-spacing:-0.29px">wt., 7.11.23</span><span class="c b" style="right:17.58px;top:386px;letter-spacing:0.32px;word-spacing:-0.32px">23 054,82</span>
<span class="c" style="right:1228.4px;top:399px;letter-spacing:-0.3px;word-spacing:0.3px">21</span><span class="c" style="left:84.6px;top:399px;letter-spacing:-0.32px;word-spacing:0.82px">Podkłady z ubitych materiałów sypkich na podłożu gruntowym - żwir 15 cm</span><span class="c" style="left:684.3px;top:399px;letter-spacing:-0.04px;word-spacing:0.04px">3,2dn.</span><span class="c" style="left:745.8px;top:399px;letter-spacing:0.01px;word-spacing:-0.01px">pn., 23.10.23</span><span class="c" style="left:808.7px;top:399px;letter-spacing:-0.03px;word-spacing:0.03px">cz., 26.10.23</span><span class="c" style="left:871.2px;top:399px;letter-spacing:-0.3px;word-spacing:0.3px">26</span><span class="c" style="right:300.88px;top:399px;letter-spacing:-0.18px;word-spacing:0.18px">77,29</span><span class="c" style="right:256.2px;top:399px">3</span><span class="c" style="right:212.08px;top:399px;letter-spacing:-0.18px;word-spacing:0.18px">25,76</span><span class="c" style="right:18.04px;top:399px;letter-spacing:-0.14px;word-spacing:0.14px">8 150,51</span>
<span class="c" style="right:1228.4px;top:412px;letter-spacing:-0.3px;word-spacing:0.3px">22</span><span class="c" style="left:84.6px;top:412px;letter-spacing:-0.33px;word-spacing:0.83px">Podkłady z ubitych materiałów sypkich na podłożu gruntowym - piasek 15 cm</span><span class="c" style="left:684.3px;top:412px;letter-spacing:-0.04px;word-spacing:0.04px">3,2dn.</span><span class="c" style="left:745.8px;top:412px;letter-spacing:0.09px;word-spacing:-0.09px">pt., 27.10.23</span><span class="c" style="left:808.7px;top:412px;letter-spacing:0.05px;word-spacing:-0.05px">cz., 2.11.23</span><span class="c" style="left:871.2px;top:412px;letter-spacing:-0.3px;word-spacing:0.3px">21</span><span class="c" style="right:300.88px;top:412px;letter-spacing:-0.18px;word-spacing:0.18px">77,29</span><span class="c" style="right:256.2px;top:412px">3</span><span class="c" style="right:212.08px;top:412px;letter-spacing:-0.18px;word-spacing:0.18px">25,76</span><span class="c" style="right:18.04px;top:412px;letter-spacing:-0.14px;word-spacing:0.14px">6 470,28</span>
<span class="c" style="right:1228.4px;top:425px;letter-spacing:-0.3px;word-spacing:0.3px">23</span><span class="c" style="left:84.6px;top:425px;letter-spacing:-0.24px;word-spacing:0.74px">Podkłady betonowe na stropie</span><span class="c" style="left:684.3px;top:425px;letter-spacing:-0.04px;word-spacing:0.04px">3,0dn.</span><span class="c" style="left:745.8px;top:425px;letter-spacing:0.18px;word-spacing:-0.18px">pt., 3.11.23</span><span class="c" style="left:808.7px;top:425px;letter-spacing:0.19px;word-spacing:-0.19px">wt., 7.11.23</span><span class="c" style="left:871.2px;top:425px;letter-spacing:-0.3px;word-spacing:0.3px">22</span><span class="c" style="right:300.88px;top:425px;letter-spacing:-0.18px;word-spacing:0.18px">70,98</span><span class="c" style="right:256.2px;top:425px">3</span><span class="c" style="right:212.08px;top:425px;letter-spacing:-0.18px;word-spacing:0.18px">23,66</span><span class="c" style="right:123.6px;top:425px">1</span><span class="c" style="right:79.68px;top:425px;letter-spacing:-0.18px;word-spacing:0.18px">18,25</span><span class="c" style="right:18.04px;top:425px;letter-spacing:-0.14px;word-spacing:0.14px">8 434,03</span>
<span class="c b" style="right:1227.8px;top:438px;letter-spacing:0.3px;word-spacing:-0.3px">24</span><span class="c b" style="left:85.2px;top:438px;letter-spacing:-0.22px;word-spacing:0.22px">STAN SUROWY ZAMKNIĘTY</span><span class="c b" style="left:684.6px;top:438px;letter-spacing:0.21px;word-spacing:-0.21px">116,3dn.</span><span class="c b" style="left:746.6px;top:438px;letter-spacing:0.09px;word-spacing:-0.09px">pn., 9.10.23</span><span class="c b" style="left:809.3px;top:438px;letter-spacing:0.12px;word-spacing:-0.12px">pn., 25.03.24</span><span class="c b" style="right:17.57px;top:438px;letter-spacing:0.33px;word-spacing:-0.33px">588 254,75</span>
<span class="c b" style="right:1227.8px;top:451px;letter-spacing:0.3px;word-spacing:-0.3px">25</span><span class="c b" style="left:85.2px;top:451px;letter-spacing:-0.38px;word-spacing:0.38px">KONSTRUKCJA PARTERU</span><span class="c b" style="left:684.6px;top:451px;letter-spacing:0.11px;word-spacing:-0.11px">39,1dn.</span><span class="c b" style="left:746.6px;top:451px;letter-spacing:0.09px;word-spacing:-0.09px">pn., 9.10.23</span><span class="c b" style="left:809.3px;top:451px;letter-spacing:0.09px;word-spacing:-0.09px">pn., 4.12.23</span><span class="c b" style="right:17.57px;top:451px;letter-spacing:0.33px;word-spacing:-0.33px">358 973,98</span>
<span class="c" style="right:1228.4px;top:465px;letter-spacing:-0.3px;word-spacing:0.3px">26</span><span class="c" style="left:84.6px;top:465px;letter-spacing:-0.3px;word-spacing:0.8px">Ściany budynków wielokondygnacyjnych z pustaków &quot;Alfa&quot; o gr. 24 cm (w tym nadproża i rdzenie żelbetowe)</span><span class="c" style="left:684.3px;top:465px;letter-spacing:-0.18px;word-spacing:0.18px">10dn.</span><span class="c" style="left:745.8px;top:465px;letter-spacing:0.04px;word-spacing:-0.04px">pn., 9.10.23</span><span class="c" style="left:808.7px;top:465px;letter-spacing:0.09px;word-spacing:-0.09px">pt., 20.10.23</span><span class="c" style="left:871.2px;top:465px">8</span><span class="c" style="right:300.79px;top:465px;letter-spacing:-0.09px;word-spacing:0.09px">124,11</span><span class="c" style="right:256.2px;top:465px">3</span><span class="c" style="right:212.08px;top:465px;letter-spacing:-0.18px;word-spacing:0.18px">41,37</span><span class="c" style="right:123.6px;top:465px">1</span><span class="c" style="right:79.68px;top:465px;letter-spacing:-0.18px;word-spacing:0.18px">12,34</span><span class="c" style="right:18.06px;top:465px;letter-spacing:-0.16px;word-spacing:0.16px">17 500,96</span>
<span class="c" style="right:1228.4px;top:478px;letter-spacing:-0.3px;word-spacing:0.3px">27</span><span class="c" style="left:84.6px;top:478px;letter-spacing:-0.34px;word-spacing:0.84px">Ściany z bloków SILKA M24 w budynkach wielokond. na zaprawie cienkospoinowej (klejowej) (w tym nadproża i rdzenie żelbetowe)</span><span class="c" style="left:684.3px;top:478px;letter-spacing:-0.14px;word-spacing:0.14px">3dn.</span><span class="c" style="left:745.8px;top:478px;letter-spacing:0.04px;word-spacing:-0.04px">pn., 9.10.23</span><span class="c" style="left:808.7px;top:478px;letter-spacing:0.12px;word-spacing:-0.12px">śr., 11.10.23</span><span class="c" style="left:871.2px;top:478px">8</span><span class="c" style="right:300.88px;top:478px;letter-spacing:-0.18px;word-spacing:0.18px">18,91</span><span class="c" style="right:256.2px;top:478px">3</span><span class="c" style="right:212.04px;top:478px;letter-spacing:-0.14px;word-spacing:0.14px">6,30</span><span class="c" style="right:123.6px;top:478px">1</span><span class="c" style="right:79.68px;top:478px;letter-spacing:-0.18px;word-spacing:0.18px">13,26</span><span class="c" style="right:18.04px;top:478px;letter-spacing:-0.14px;word-spacing:0.14px">6 603,48</span>
<span class="c" style="right:1228.4px;top:491px;letter-spacing:-0.3px;word-spacing:0.3px">28</span><span class="c" style="left:84.6px;top:491px;letter-spacing:-0.35px;word-spacing:0.85px">Belki i podciągi żelbetowe; stosunek deskowanego obwodu do przekroju do 10 - z zastosowaniem pompy do betonu</span><span class="c" style="left:684.3px;top:491px;letter-spacing:-0.04px;word-spacing:0.04px">0,9dn.</span><span class="c" style="left:745.8px;top:491px;letter-spacing:0.16px;word-spacing:-0.16px">śr., 8.11.23</span><span class="c" style="left:808.7px;top:491px;letter-spacing:0.16px;word-spacing:-0.16px">śr., 8.11.23</span><span class="c" style="left:871.2px;top:491px;letter-spacing:-0.3px;word-spacing:0.3px">23</span><span class="c" style="right:300.88px;top:491px;letter-spacing:-0.18px;word-spacing:0.18px">21,84</span><span class="c" style="right:256.2px;top:491px">4</span><span class="c" style="right:212.04px;top:491px;letter-spacing:-0.14px;word-spacing:0.14px">5,46</span><span class="c" style="right:123.6px;top:491px">1</span><span class="c" style="right:79.64px;top:491px;letter-spacing:-0.14px;word-spacing:0.14px">1,75</span><span class="c" style="right:18.04px;top:491px;letter-spacing:-0.14px;word-spacing:0.14px">2 338,89</span>
<span class="c" style="right:1228.4px;top:504px;letter-spacing:-0.3px;word-spacing:0.3px">29</span><span class="c" style="left:84.6px;top:504px;letter-spacing:-0.37px;word-spacing:0.87px">Stropy z pustaków typu DZ - wieńce monolityczne na ścianach zewnętrznych o szerokości do 30 cm&#x27;</span><span class="c" style="left:684.3px;top:504px;letter-spacing:-0.04px;word-spacing:0.04px">0,4dn.</span><span class="c" style="left:745.8px;top:504px;letter-spacing:0.05px;word-spacing:-0.05px">cz., 9.11.23</span><span class="c" style="left:808.7px;top:504px;letter-spacing:0.05px;word-spacing:-0.05px">cz., 9.11.23</span><span class="c" style="left:871.2px;top:504px;letter-spacing:-0.3px;word-spacing:0.3px">28</span><span class="c" style="right:300.84px;top:504px;letter-spacing:-0.14px;word-spacing:0.14px">8,66</span><span class="c" style="right:256.2px;top:504px">3</span><span class="c" style="right:212.04px;top:504px;letter-spacing:-0.14px;word-spacing:0.14px">2,89</span><span class="c" style="right:123.6px;top:504px">1</span><span class="c" style="right:79.64px;top:504px;letter-spacing:-0.14px;word-spacing:0.14px">0,71</span><span class="c" style="right:18.11px;top:504px;letter-spacing:-0.21px;word-spacing:0.21px">964,29</span>
<span class="c" style="right:1228.4px;top:517px;letter-spacing:-0.3px;word-spacing:0.3px">30</span><span class="c" style="left:84.6px;top:517px;letter-spacing:-0.37px;word-spacing:0.87px">Stropy z pustaków typu DZ - wieńce monolityczne na ścianach zewnętrznych o szerokości do 30 cm</span><span class="c" style="left:684.3px;top:517px;letter-spacing:-0.04px;word-spacing:0.04px">1,8dn.</span><span class="c" style="left:745.8px;top:517px;letter-spacing:0.14px;word-spacing:-0.14px">pt., 10.11.23</span><span class="c" style="left:808.7px;top:517px;letter-spacing:0.06px;word-spacing:-0.06px">pn., 13.11.23</span><span class="c" style="left:871.2px;top:517px;letter-spacing:-0.3px;word-spacing:0.3px">29</span><span class="c" style="right:300.88px;top:517px;letter-spacing:-0.18px;word-spacing:0.18px">42,74</span><span class="c" style="right:256.2px;top:517px">3</span><span class="c" style="right:212.08px;top:517px;letter-spacing:-0.18px;word-spacing:0.18px">14,25</span><span class="c" style="right:123.6px;top:517px">1</span><span class="c" style="right:79.64px;top:517px;letter-spacing:-0.14px;word-spacing:0.14px">3,50</span><span class="c" style="right:18.04px;top:517px;letter-spacing:-0.14px;word-spacing:0.14px">4 756,32</span>
<span class="c" style="right:1228.4px;top:530px;letter-spacing:-0.3px;word-spacing:0.3px">31</span><span class="c" style="left:84.6px;top:530px;letter-spacing:-0.35px;word-spacing:0.85px">Płyta stropowa P1 o grubości 20 cm i powierzchni między belkami ponad 10 m2 w deskowaniu Stal-Form - transport betonu w pojemniku, pozostałych materiałów żurawiem</span><span class="c" style="left:684.3px;top:530px;letter-spacing:-0.04px;word-spacing:0.04px">3,1dn.</span><span class="c" style="left:745.8px;top:530px;letter-spacing:0.14px;word-spacing:-0.14px">wt., 14.11.23</span><span class="c" style="left:808.7px;top:530px;letter-spacing:0.14px;word-spacing:-0.14px">pt., 17.11.23</span><span class="c" style="left:871.2px;top:530px;letter-spacing:-0.3px;word-spacing:0.3px">30</span><span class="c" style="right:300.88px;top:530px;letter-spacing:-0.18px;word-spacing:0.18px">74,64</span><span class="c" style="right:256.2px;top:530px">3</span><span class="c" style="right:212.08px;top:530px;letter-spacing:-0.18px;word-spacing:0.18px">24,88</span><span class="c" style="right:123.6px;top:530px">1</span><span class="c" style="right:79.68px;top:530px;letter-spacing:-0.18px;word-spacing:0.18px">22,42</span><span class="c" style="right:18.04px;top:530px;letter-spacing:-0.14px;word-spacing:0.14px">6 349,56</span>
<div id="sb"></div><div id="rfr"></div><div id="rfr2"></div><div id="sbth"></div><div id="sbup"></div>
<svg style="left:1267px;top:138px" width="7" height="5" viewBox="0 0 7 5"><path d="M0.900 3.800l2.600-2.700 2.600 2.700" stroke="#6a6a6a" stroke-width="1.100" fill="none"/></svg><svg style="left:1267px;top:536px" width="7" height="6" viewBox="0 0 7 6"><path d="M0.900 1.100l2.600 2.900 2.600-2.900" stroke="#606060" stroke-width="1.200" fill="none"/></svg>
<div id="gbot"></div><div id="gbot2"></div>
<div id="status"></div>
<span class="sbt" style="left:5.6px;top:551px;letter-spacing:-0.32px;word-spacing:0.32px">Lista paneli</span>
<svg style="left:1271px;top:555px" width="8" height="8" viewBox="0 0 8 8"><path d="M5.300 0.500h1.400v1.400h-1.400zM5.300 2.900h1.400v1.400h-1.400zM2.900 2.900h1.400v1.400h-1.400zM5.300 5.300h1.400v1.400h-1.400zM2.900 5.300h1.400v1.400h-1.400zM0.500 5.300h1.400v1.400h-1.400z" fill="#555"/></svg><svg style="left:44px;top:553px" width="5" height="4" viewBox="0 0 5 4"><path d="M0.900 0.900h2.800l-1.400 1.800z" fill="#5c5c5c"/></svg>
<div id="bt"></div><div id="bl"></div><div id="br"></div>
<div id="appbtn"></div><svg style="left:13px;top:24px" width="12" height="12" viewBox="0 0 12 12"><rect x="0.400" y="0.500" width="8.400" height="7.300" fill="#ececec"/><rect x="0.400" y="0.500" width="1.700" height="7.300" fill="#fafafa"/><path d="M2.400 0.900h6.400" stroke="#3a3a3a" stroke-width="0.800" stroke-dasharray="0.900 0.900"/><circle cx="6.400" cy="6.300" r="3.700" fill="#e4effb" stroke="#23579f" stroke-width="1.300"/><circle cx="6.400" cy="6.300" r="2.300" fill="#f1f6fd"/><path d="M6.400 4.900v1.500h1.300" stroke="#3b3b3b" stroke-width="0.700" fill="none"/></svg>
</div>
</body>
</html>
